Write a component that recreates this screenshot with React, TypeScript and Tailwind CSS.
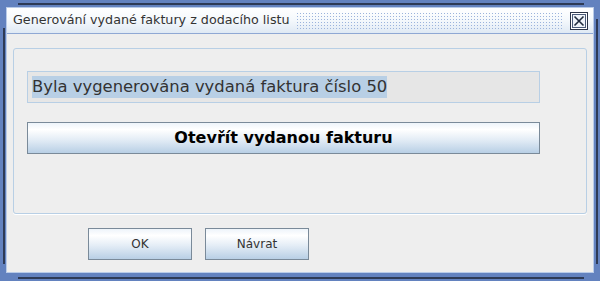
const font = { fontFamily: '"DejaVu Sans", "Liberation Sans", sans-serif' };

function CloseIcon() {
  return (
    <svg width="18" height="18" viewBox="0 0 18 18" className="block">
      <rect x="0.5" y="0.5" width="17" height="17" fill="#dfe8f4" stroke="#2b3448" />
      <rect x="1.5" y="1.5" width="15" height="15" fill="none" stroke="#ffffff" />
      <rect x="2.5" y="2.5" width="13" height="13" fill="#eef3f9" stroke="#4a5a78" />
      <path d="M4.5 4.5 L13.5 13.5 M13.5 4.5 L4.5 13.5" stroke="#1f2a3d" strokeWidth="1.6" />
    </svg>
  );
}

function DialogButton({ label, bold, className }: { label: string; bold?: boolean; className?: string }) {
  return (
    <button
      className={`flex h-[32px] items-center justify-center border border-[#7a8a99] bg-[linear-gradient(to_bottom,#eef4fa_0%,#ffffff_22%,#e4edf6_55%,#b8cfe5_100%)] text-[#333333] ${
        bold ? 'text-[16px] font-bold text-black' : 'text-[12px]'
      } ${className ?? ''}`}
      style={font}
    >
      {label}
    </button>
  );
}

export default function App() {
  return (
    <div className="relative h-[281px] w-[600px] overflow-hidden bg-[#6382bf] pt-[7px] pr-[6px] pb-[8px] pl-[6px]" style={font}>
      {/* frame edge shading */}
      <div className="absolute top-[3px] left-[18px] h-[2px] w-[566px] bg-[#2e3a55]" />
      <div className="absolute top-[28px] left-[3px] h-[236px] w-[2px] bg-[#2e3a55]" />
      <div className="absolute top-[19px] left-[596px] h-[245px] w-[2px] bg-[#2e3a55]" />
      <div className="absolute top-[277px] left-[18px] h-[2px] w-[566px] bg-[#2e3a55]" />

      <div className="flex h-full flex-col border border-[#b9cbe8] bg-[#eeeeee]">
        {/* title bar */}
        <div className="flex h-[26px] items-center border-b border-[#8fa8d4] bg-[linear-gradient(to_bottom,#ffffff_0%,#f4f8fc_50%,#dfe9f4_100%)] pl-[6px] pr-[5px]">
          <span className="text-[12.7px] leading-none whitespace-nowrap text-[#333333]">
            Generování vydané faktury z dodacího listu
          </span>
          <div className="mx-[6px] h-[17px] flex-1 bg-[radial-gradient(circle,#9bb3dc_0.7px,transparent_1px)] bg-[length:3px_3px]" />
          <CloseIcon />
        </div>

        {/* content */}
        <div className="flex flex-1 flex-col px-[6px] pt-[14px]">
          <div className="flex h-[166px] flex-col rounded-[3px] border border-[#b8cfe5] pt-[22px] pl-[13px] pr-[46px] shadow-[0_1px_0_#ffffff]">
            <div className="flex h-[32px] items-center border border-[#b8cfe5] bg-[#e6e6e6] pl-[4px]">
              <span className="bg-[#b8cfe5] text-[16.4px] leading-[22px] whitespace-nowrap text-[#333333]">
                Byla vygenerována vydaná faktura číslo 50
              </span>
            </div>
            <DialogButton label="Otevřít vydanou fakturu" bold className="mt-[19px] w-full" />
          </div>

          <div className="mt-[14px] flex gap-[13px] pl-[75px]">
            <DialogButton label="OK" className="w-[104px]" />
            <DialogButton label="Návrat" className="w-[104px]" />
          </div>
        </div>
      </div>
    </div>
  );
}
